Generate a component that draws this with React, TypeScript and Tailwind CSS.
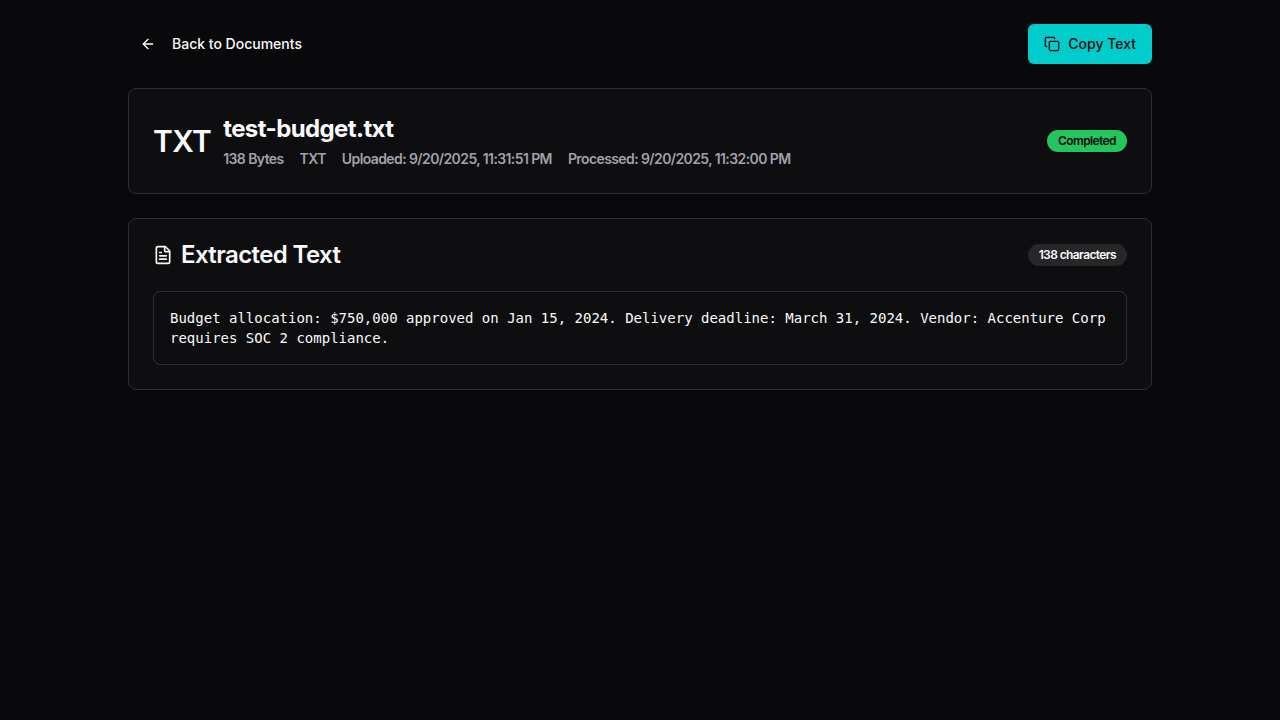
import { ArrowLeft, Copy, FileText } from "lucide-react";

const details = [
  "138 Bytes",
  "TXT",
  "Uploaded: 9/20/2025, 11:31:51 PM",
  "Processed: 9/20/2025, 11:32:00 PM",
];

const extracted =
  "Budget allocation: $750,000 approved on Jan 15, 2024. Delivery deadline: March 31, 2024. Vendor: Accenture Corp requires SOC 2 compliance.";

export default function App() {
  return (
    <main className="min-h-screen bg-[#09090b] px-6 py-6 font-['Inter',sans-serif] text-[#fafafa]">
      <div className="mx-auto flex max-w-5xl flex-col gap-6">
        <header className="flex items-center justify-between">
          <a href="#documents" className="flex h-9 items-center gap-4 rounded-md px-3 text-sm font-medium">
            <ArrowLeft className="size-4" />
            Back to Documents
          </a>
          <button type="button" className="flex h-10 items-center gap-2 rounded-md bg-[#00cccc] px-4 text-sm font-medium text-[#09090b]">
            <Copy className="size-4" />
            Copy Text
          </button>
        </header>

        <section className="rounded-lg border border-[#2e2e32] bg-[#0e0e10] p-6">
          <div className="flex items-center justify-between text-2xl font-semibold tracking-tight">
            <div className="flex items-center gap-3">
              <span className="text-3xl">TXT</span>
              <div>
                <h1 className="font-bold">test-budget.txt</h1>
                <ul className="mt-1 flex gap-4 text-sm text-[#a1a1aa]">
                  {details.map((detail) => (
                    <li key={detail}>{detail}</li>
                  ))}
                </ul>
              </div>
            </div>
            <span className="rounded-full border border-transparent bg-[#22c55e] px-2.5 py-0.5 text-xs text-[#09090b]">
              Completed
            </span>
          </div>
        </section>

        <section className="rounded-lg border border-[#2e2e32] bg-[#0e0e10] p-6">
          <div className="flex items-center justify-between text-2xl leading-6 font-semibold tracking-tight">
            <h2 className="flex items-center gap-2">
              <FileText className="size-5" />
              Extracted Text
            </h2>
            <span className="rounded-full border border-transparent bg-[#27272a] px-2.5 py-0.5 text-xs">
              138 characters
            </span>
          </div>
          <div className="mt-6 rounded-lg border border-[#2e2e32] p-4">
            <pre className="font-['DejaVu_Sans_Mono',monospace] text-sm whitespace-pre-wrap">{extracted}</pre>
          </div>
        </section>
      </div>
    </main>
  );
}
